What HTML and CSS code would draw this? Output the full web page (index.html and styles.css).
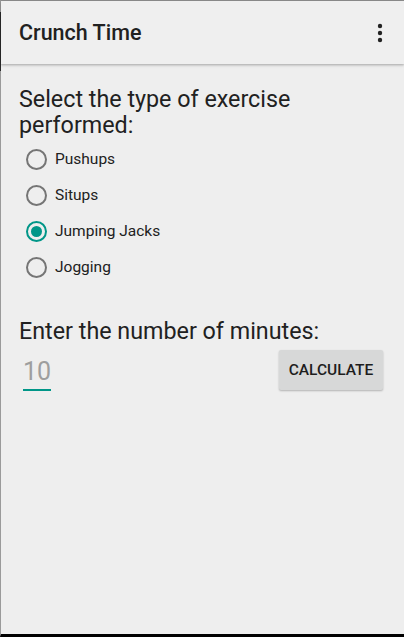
FILE: index.html
```html
<!DOCTYPE html>
<html lang="en">
<head>
<meta charset="utf-8">
<title>Crunch Time</title>
<link rel="stylesheet" href="styles.css">
</head>
<body>
<div class="frame">
  <div class="edge-mark"></div>
  <header class="appbar">
    <h1 class="title">Crunch Time</h1>
    <button class="overflow" aria-label="More options">
      <svg width="6" height="20" viewBox="0 0 6 20"><circle cx="3" cy="3" r="2.2"/><circle cx="3" cy="10" r="2.2"/><circle cx="3" cy="17" r="2.2"/></svg>
    </button>
  </header>
  <main class="content">
    <p class="prompt">Select the type of exercise performed:</p>
    <div class="radios">
      <label class="radio"><span class="ring"></span><span class="label">Pushups</span></label>
      <label class="radio"><span class="ring"></span><span class="label">Situps</span></label>
      <label class="radio checked"><span class="ring"><span class="dot"></span></span><span class="label">Jumping Jacks</span></label>
      <label class="radio"><span class="ring"></span><span class="label">Jogging</span></label>
    </div>
    <p class="prompt minutes">Enter the number of minutes:</p>
    <div class="entry-row">
      <div class="field"><span class="value">10</span></div>
      <button class="calc">CALCULATE</button>
    </div>
  </main>
</div>
</body>
</html>
```
FILE: styles.css
```css
* { box-sizing: border-box; }
html, body { margin: 0; padding: 0; }
body {
  width: 404px;
  height: 637px;
  overflow: hidden;
  font-family: Roboto, "Liberation Sans", sans-serif;
  background: #eeeeee;
}
.frame {
  position: relative;
  height: 637px;
  background: #eeeeee;
  border-top: 1px solid #8c8c8c;
  border-left: 1px solid #9a9a9a;
  border-bottom: 3px solid #000;
  display: flex;
  flex-direction: column;
}
.edge-mark {
  position: absolute;
  left: -1px;
  top: 11px;
  width: 1px;
  height: 59px;
  background: #2a2a2a;
}
.appbar {
  height: 63px;
  flex: 0 0 63px;
  background: #efefef;
  display: flex;
  align-items: center;
  justify-content: space-between;
  padding: 0 0 0 18px;
  box-shadow: 0 1px 2px rgba(0,0,0,0.22), 0 2px 3px rgba(0,0,0,0.08);
  position: relative;
  z-index: 1;
}
.title {
  margin: 0;
  font-size: 21.5px;
  font-weight: 500;
  color: #212121;
  letter-spacing: 0;
}
.overflow {
  border: 0;
  background: none;
  width: 24px;
  height: 40px;
  margin-right: 12px;
  padding: 0;
  display: flex;
  align-items: center;
  justify-content: center;
  fill: #222;
}
.content {
  padding: 22px 18px 0 18px;
  display: flex;
  flex-direction: column;
}
.prompt {
  margin: 0;
  font-size: 23.3px;
  line-height: 26px;
  color: #212121;
}
.radios {
  display: flex;
  flex-direction: column;
  margin-top: 3px;
  padding-left: 7px;
}
.radio {
  height: 36px;
  display: flex;
  align-items: center;
  gap: 8px;
}
.ring {
  width: 21px;
  height: 21px;
  border: 2px solid #757575;
  border-radius: 50%;
  display: flex;
  align-items: center;
  justify-content: center;
}
.checked .ring { border-color: #009688; }
.dot {
  width: 11px;
  height: 11px;
  border-radius: 50%;
  background: #009688;
}
.label {
  font-size: 15.5px;
  color: #212121;
}
.minutes { margin-top: 33px; }
.entry-row {
  display: flex;
  justify-content: space-between;
  align-items: flex-start;
  margin-top: 6px;
}
.field {
  margin-left: 4px;
  margin-top: 9px;
  width: 28px;
  border-bottom: 2px solid #009688;
  padding-bottom: 4px;
}
.value {
  font-size: 25px;
  color: #9e9e9e;
  line-height: 26px;
  display: block;
}
.calc {
  width: 104px;
  height: 40px;
  border: 0;
  border-radius: 2px;
  background: #d7d8d8;
  font-family: Roboto, "Liberation Sans", sans-serif;
  font-size: 15.5px;
  font-weight: 500;
  color: #1d1d1d;
  box-shadow: 0 1px 2px rgba(0,0,0,0.25);
  margin-right: 3px;
  padding: 0;
}
```
